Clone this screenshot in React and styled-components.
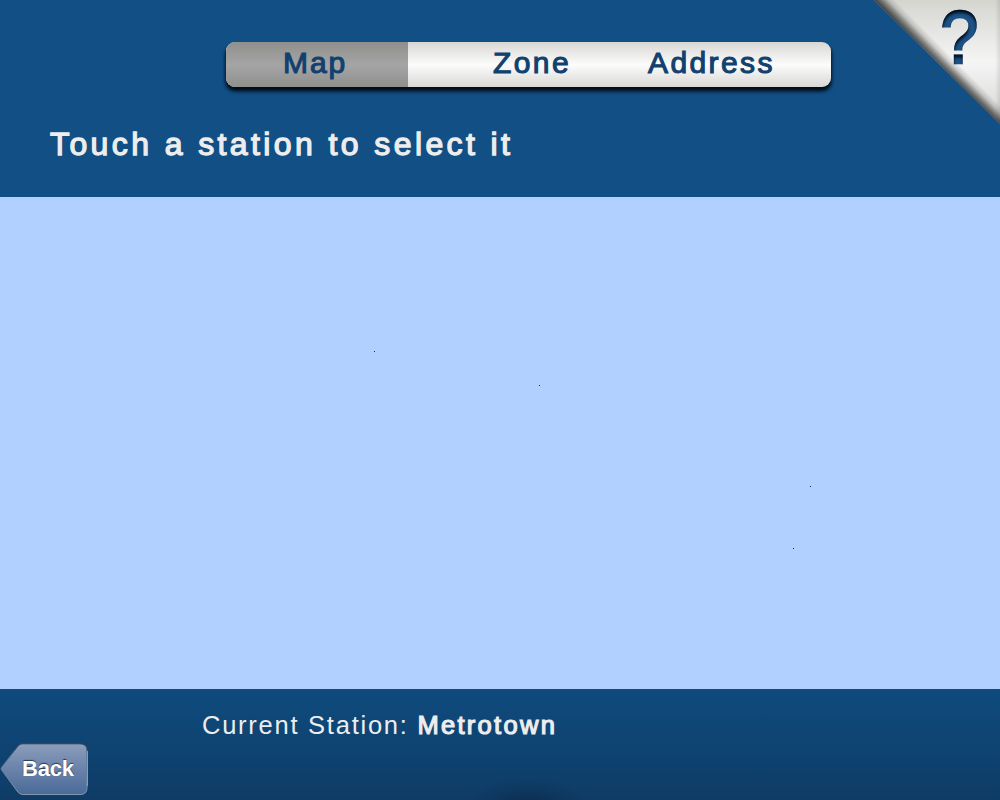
import React from "react";
import styled, { createGlobalStyle } from "styled-components";

const GlobalStyle = createGlobalStyle`
  * { box-sizing: border-box; }
  body { margin: 0; background: #114f85; font-family: "Liberation Sans", Arial, sans-serif; }
`;

const Screen = styled.main`
  position: relative;
  width: 1000px;
  height: 800px;
  display: flex;
  flex-direction: column;
  overflow: hidden;
  background: #114f85;
`;

const Header = styled.header`
  height: 197px;
  padding-top: 42px;
`;

const Tabs = styled.nav`
  display: flex;
  width: 605px;
  height: 45px;
  margin-left: 226px;
  border-radius: 9px;
  background: linear-gradient(#d8d7d4, #fcfcfc 51%, #d8d7d4);
  box-shadow: 0 4px 4px 0 #020b14, 0 3px 3px 0 rgba(0, 8, 18, 0.6);
`;

const Tab = styled.button`
  width: ${(p) => p.$width}px;
  height: 45px;
  padding: 0 0 3px ${(p) => p.$inset}px;
  border: 0;
  border-radius: ${(p) => (p.$active ? "9px 0 0 9px" : "0")};
  background: ${(p) => (p.$active ? "linear-gradient(#8f8f8e, #a5a5a5 51%, #8f8f8e)" : "none")};
  color: #11416f;
  font: 30px/42px "Liberation Sans", Arial, sans-serif;
  letter-spacing: ${(p) => p.$tracking}px;
  text-align: left;
  white-space: nowrap;
  -webkit-text-stroke: 1.1px #11416f;
`;

const Title = styled.h1`
  margin: 37px 0 0 50px;
  color: #ededee;
  font-size: 32px;
  font-weight: 400;
  line-height: 40px;
  letter-spacing: 3.4px;
  white-space: nowrap;
  -webkit-text-stroke: 1.3px #ededee;
`;

const HelpCorner = styled.svg`
  position: absolute;
  top: 0;
  right: 0;
`;

const HelpMark = styled.text`
  font: 72px "Liberation Sans", Arial, sans-serif;
  fill: #1d5388;
  stroke: #1d5388;
  stroke-width: 2.6px;
`;

const MapArea = styled.section`
  position: relative;
  height: 492px;
  background: #b1d0ff;
`;

const Station = styled.i`
  position: absolute;
  left: ${(p) => p.$x}px;
  top: ${(p) => p.$y}px;
  width: 1px;
  height: 1px;
  background: #1c3152;
`;

const Footer = styled.footer`
  display: flex;
  height: 111px;
  background:
    radial-gradient(ellipse 60px 26px at 528px 115px, rgba(8, 24, 48, 0.4), rgba(8, 24, 48, 0.15) 55%, rgba(8, 24, 48, 0)),
    linear-gradient(#0f4b7e, #0e3c66);
`;

const BackButton = styled.button`
  width: 90px;
  height: 54px;
  margin-top: 53px;
  padding: 0;
  border: 0;
  background: none;
  display: grid;

  > * { grid-area: 1 / 1; }
`;

const BackLabel = styled.span`
  padding-left: 22px;
  color: #fff;
  font: bold 22px/54px "Liberation Sans", Arial, sans-serif;
  letter-spacing: -0.2px;
  text-align: left;
  text-shadow: 0 -1px 1px #26374f;
  z-index: 1;
`;

const Current = styled.p`
  margin: 20px 0 0 112px;
  color: #ededee;
  font-size: 25.5px;
  line-height: 32px;
  letter-spacing: 1.75px;
  white-space: nowrap;
`;

const StationName = styled.span`
  letter-spacing: 2.3px;
  -webkit-text-stroke: 1.2px #ededee;
`;

const stations = [[374, 154], [539, 188], [810, 289], [793, 351]];

export default function App() {
  return (
    <>
      <GlobalStyle />
      <Screen>
        <Header>
          <Tabs>
            <Tab $active $width={182} $inset={57} $tracking={1.9}>Map</Tab>
            <Tab $width={213} $inset={85} $tracking={2.4}>Zone</Tab>
            <Tab $width={210} $inset={27} $tracking={2.4}>Address</Tab>
          </Tabs>
          <Title>Touch a station to select it</Title>
        </Header>
        <MapArea>
          {stations.map(([x, y]) => <Station key={x} $x={x} $y={y} />)}
        </MapArea>
        <Footer>
          <BackButton>
            <svg width="90" height="54" viewBox="0 0 90 54">
              <defs>
                <linearGradient id="backFill" x2="0" y2="1">
                  <stop stopColor="#8b9dbb" />
                  <stop offset=".5" stopColor="#6a83aa" />
                  <stop offset="1" stopColor="#496a98" />
                </linearGradient>
                <linearGradient id="backEdge" x2="0" y2="1">
                  <stop stopColor="#343f50" />
                  <stop offset=".25" stopColor="#566a88" />
                  <stop offset="1" stopColor="#8396ae" />
                </linearGradient>
              </defs>
              <path d="M22 1.8H80Q87 1.8 87 8.5V46Q87 52.5 80 52.5H23Q20 52.5 18 50.2L1.5 28Q.6 26.8 1.5 25.5L18 4Q20 1.8 22 1.8Z" fill="url(#backFill)" stroke="url(#backEdge)" />
              <path d="M87.5 9V44" stroke="#879cb8" />
            </svg>
            <BackLabel>Back</BackLabel>
          </BackButton>
          <Current>Current Station: <StationName>Metrotown</StationName></Current>
        </Footer>
        <HelpCorner width="126" height="126" viewBox="0 0 126 126">
          <defs>
            <linearGradient id="cornerFill" x2="0" y2="1">
              <stop stopColor="#d5d5d0" />
              <stop offset=".5" stopColor="#f5f5f5" />
              <stop offset="1" stopColor="#d5d5d2" />
            </linearGradient>
            <linearGradient id="cornerShade" gradientUnits="userSpaceOnUse" x1="63" y1="62" x2="73" y2="52">
              <stop stopColor="#000" stopOpacity=".68" />
              <stop offset=".3" stopColor="#000" stopOpacity=".46" />
              <stop offset=".65" stopColor="#000" stopOpacity=".14" />
              <stop offset="1" stopColor="#000" stopOpacity="0" />
            </linearGradient>
            <linearGradient id="rightShade">
              <stop offset=".96" stopColor="#000" stopOpacity="0" />
              <stop offset="1" stopColor="#000" stopOpacity=".1" />
            </linearGradient>
            <filter id="innerShadow" x="-20%" y="-20%" width="140%" height="140%" colorInterpolationFilters="sRGB">
              <feGaussianBlur in="SourceAlpha" stdDeviation="1.7" />
              <feOffset dy="3" result="shifted" />
              <feComposite in="SourceAlpha" in2="shifted" operator="out" result="edge" />
              <feFlood floodColor="#020b16" />
              <feComposite in2="edge" operator="in" result="shade" />
              <feMerge>
                <feMergeNode in="SourceGraphic" />
                <feMergeNode in="shade" />
              </feMerge>
            </filter>
          </defs>
          <path d="M0 0H126V124Z" fill="url(#cornerFill)" />
          <path d="M0 0H126V124Z" fill="url(#cornerShade)" />
          <path d="M0 0H126V124Z" fill="url(#rightShade)" />
          <HelpMark transform="translate(66.7 63.4) scale(.93 1.02)" filter="url(#innerShadow)">?</HelpMark>
        </HelpCorner>
      </Screen>
    </>
  );
}
